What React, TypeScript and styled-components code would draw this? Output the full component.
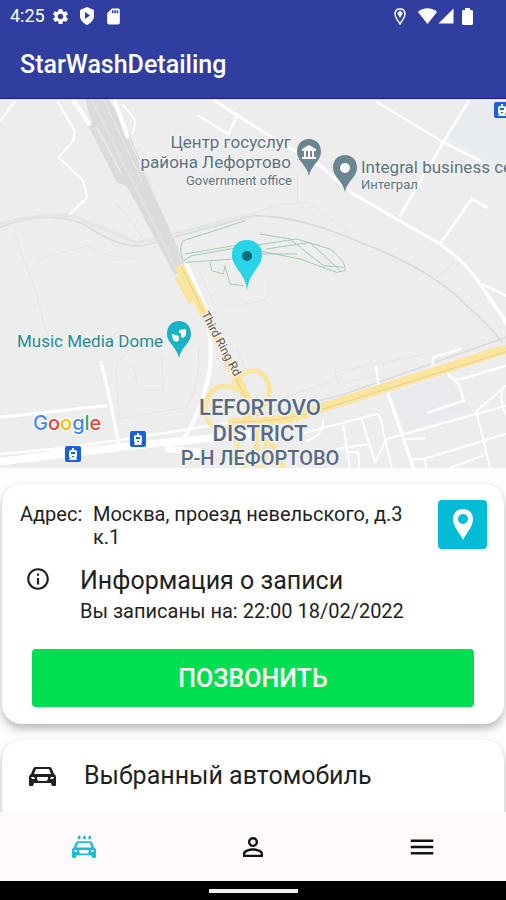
import React from "react";
import styled, { createGlobalStyle } from "styled-components";
import {
  MdInfoOutline,
  MdMenu,
  MdPersonOutline,
  MdSdCard,
  MdSettings,
  MdSignalCellular4Bar,
} from "react-icons/md";

const GlobalStyle = createGlobalStyle`
  *, *::before, *::after { box-sizing: border-box; }
  body { margin: 0; background: #fff; }
  body, button { font-family: Roboto, "Noto Sans", sans-serif; }
`;

const Screen = styled.div`
  display: flex;
  flex-direction: column;
  height: 100vh;
  overflow: hidden;
  color: #1f1f1f;
`;

const Header = styled.header`
  flex: none;
  background: #303f9f;
  border-bottom: 1px solid #1a1796;
  color: #fff;
`;

const StatusBar = styled.div`
  display: flex;
  align-items: center;
  justify-content: space-between;
  height: 32px;
  padding: 0 33px 0 10px;
`;

const StatusGroup = styled.div<{ $gap: number }>`
  display: flex;
  align-items: center;
  gap: ${(p) => p.$gap}px;
`;

const Clock = styled.span`
  font-size: 18px;
  line-height: 24px;
`;

const AppTitle = styled.h1`
  margin: 0;
  padding: 0 20px;
  font-size: 25px;
  font-weight: 500;
  line-height: 66px;
`;

const MapView = styled.section`
  flex: none;
  background: #ededed;
`;

const MapDrawing = styled.svg`
  display: block;
  width: 100%;
  height: auto;
  font-family: Roboto, "Noto Sans", sans-serif;
`;

const Cards = styled.main`
  display: flex;
  flex: 1 1 0;
  flex-direction: column;
  gap: 16px;
  min-height: 0;
  overflow: hidden;
  padding: 16px 2px 0;
  background: #fdfdfd;
`;

const Card = styled.section`
  flex: none;
  border-radius: 20px;
  background: #fff;
  box-shadow: 0 5px 8px rgba(0, 0, 0, 0.26), 0 0 2px rgba(0, 0, 0, 0.06);
`;

const BookingCard = styled(Card)`
  padding: 16px 17px 17px;
`;

const CarCard = styled(Card)`
  display: flex;
  align-items: center;
  gap: 28px;
  min-height: 88px;
  padding: 0 27px 16px;
`;

const AddressRow = styled.div`
  display: flex;
  align-items: flex-start;
  padding-left: 1px;
`;

const AddressLabel = styled.span`
  flex: none;
  width: 73px;
  padding-top: 3px;
  font-size: 20px;
  line-height: 23px;
`;

const Address = styled.address`
  flex: 1;
  padding-top: 3px;
  padding-right: 24px;
  font-size: 20px;
  font-style: normal;
  line-height: 23px;
`;

const MapButton = styled.button`
  display: grid;
  flex: none;
  place-items: center;
  width: 49px;
  height: 49px;
  padding: 0;
  border: 0;
  border-radius: 4px;
  background: #00bcd7;
  color: #fff;
`;

const InfoRow = styled.div`
  display: flex;
  gap: 29px;
  align-items: flex-start;
  padding: 17px 0 0 6px;
`;

const InfoIcon = styled.span`
  display: flex;
  width: 26px;
`;

const CardTitle = styled.h2`
  margin: 0;
  font-size: 25px;
  font-weight: 400;
  line-height: 30px;
`;

const BookingTime = styled.p`
  margin: 1px 0 0;
  font-size: 20px;
  line-height: 28px;
`;

const CallButton = styled.button`
  display: block;
  width: calc(100% - 26px);
  height: 58px;
  margin: 24px 13px 0;
  padding: 0;
  border: 0;
  border-radius: 4px;
  background: #00df50;
  color: #fff;
  font-size: 25px;
  font-weight: 500;
`;

const NavBar = styled.nav`
  display: grid;
  flex: none;
  grid-template-columns: repeat(3, 1fr);
  height: 69px;
  background: #fffafa;
`;

const NavButton = styled.button<{ $active?: boolean }>`
  display: grid;
  place-items: center;
  padding: 0;
  border: 0;
  background: none;
  color: ${(p) => (p.$active ? "#1fbad3" : "#111")};
`;

const GestureBar = styled.footer`
  display: flex;
  flex: none;
  align-items: center;
  justify-content: center;
  height: 19px;
  background: #000;
`;

const GestureHandle = styled.span`
  width: 89px;
  height: 4px;
  background: #f4f0f0;
`;

const ShieldPlay = () => (
  <svg width="16" height="18" viewBox="0 0 16 18" aria-hidden="true">
    <path
      fillRule="evenodd"
      fill="#fff"
      d="M8 0 L15 3 V9 C15 13 12 16 8 18 C4 16 1 13 1 9 V3 Z M6 5 V12 L11 8.500 Z"
    />
  </svg>
);

const LocationOutline = () => (
  <svg width="12" height="17" viewBox="0 0 12 17" aria-hidden="true">
    <path
      fill="none"
      stroke="#fff"
      strokeWidth="1.500"
      d="M6 16 C4 12 1 10 1 6 C1 3 3 1 6 1 C9 1 11 3 11 6 C11 10 8 12 6 16 Z"
    />
    <path fill="#fff" d="M3 5 H9 L6 10 Z" />
    <circle cx="6" cy="5" r="2" fill="#fff" />
  </svg>
);

const WifiFull = () => (
  <svg width="19" height="16" viewBox="0 0 19 16" aria-hidden="true">
    <path fill="#fff" d="M0 4 C5 -1 14 -1 19 4 L9.500 16 Z" />
  </svg>
);

const Battery = () => (
  <svg width="11" height="17" viewBox="0 0 11 17" aria-hidden="true">
    <path fill="#fff" d="M3 0 H8 V2 H10 L11 3 V16 L10 17 H1 L0 16 V3 L1 2 H3 Z" />
  </svg>
);

const MapMarker = () => (
  <svg width="20" height="31" viewBox="0 0 20 31" aria-hidden="true">
    <path
      fill="currentColor"
      fillRule="evenodd"
      d="M10 31 C7 24 0 18 0 10 C0 4 4 0 10 0 C16 0 20 4 20 10 C20 18 13 24 10 31 Z M10 5 A5 5 0 1 0 10 15 A5 5 0 1 0 10 5 Z"
    />
  </svg>
);

const CAR_FRONT =
  "M6 0 H21 Q22 0 23 2 L25 7 Q27 8 27 10 V18 Q27 19 26 19 H23 L22 16 H5 L4 19 H1 Q0 19 0 18 V10 Q0 8 2 7 L4 2 Q5 0 6 0 Z M7 2 L5 7 H22 L20 2 Z M2 10 L3 12 H6 L5 10 Z M22 10 L21 12 H24 L25 10 Z M8 10 Q8 14 10 14 H17 Q19 14 19 10 Z";

const CarFront = () => (
  <svg width="27" height="19" viewBox="0 0 27 19" aria-hidden="true">
    <path fill="currentColor" fillRule="evenodd" d={CAR_FRONT} />
  </svg>
);

const CarWash = () => (
  <svg width="24" height="23" viewBox="0 0 27 26" aria-hidden="true">
    <path fill="currentColor" fillRule="evenodd" transform="translate(0 7)" d={CAR_FRONT} />
    <g fill="currentColor">
      <path d="M8 0 L10 3 Q9 5 8 5 Q7 5 6 3 Z" />
      <path d="M14 0 L16 3 Q15 5 14 5 Q13 5 12 3 Z" />
      <path d="M20 0 L22 3 Q21 5 20 5 Q19 5 18 3 Z" />
    </g>
  </svg>
);

type PinProps = { x: number; y: number; color: string; children?: React.ReactNode };

const PlacePin = ({ x, y, color, children }: PinProps) => (
  <g transform={`translate(${x} ${y})`}>
    <path
      fill={color}
      d="M0 0 C-2 -11 -12 -15 -12 -24 C-12 -32 -7 -37 0 -37 C7 -37 12 -32 12 -24 C12 -15 2 -11 0 0 Z"
    />
    {children}
  </g>
);

const TransitStop = ({ x, y }: { x: number; y: number }) => (
  <g transform={`translate(${x} ${y})`}>
    <rect width="16" height="16" rx="2" fill="#1a5fdc" />
    <path
      fill="#fff"
      fillRule="evenodd"
      d="M7 2 H9 V4 H10 Q12 4 12 6 V10 Q12 12 11 12 L12 14 H4 L5 12 Q4 12 4 10 V6 Q4 4 6 4 H7 Z M6 6 V8 H10 V6 Z M7 10 V11 H9 V10 Z"
    />
  </g>
);

/* Road geometry is drawn on a grid three times finer than the labels. */
const Roads = () => (
  <g transform="scale(0.333333)" fill="none" strokeLinejoin="round" strokeLinecap="round">
    <path fill="#e9ecee" d="M1345 112 L1405 5 H1518 V190 L1440 175 Z" />
    <path fill="#e8eaed" d="M1170 885 L1340 828 L1390 905 L1420 925 L1220 1000 Z" />

    <g stroke="#e3e4e6" strokeWidth="3">
      <path d="M40 395 L75 490 L105 570 L135 690 L195 785" />
      <path d="M105 483 L265 440 L325 470 L405 478" />
      <path d="M350 315 L400 375 L430 420" />
      <path d="M375 770 Q345 775 348 830 L358 960 L560 925 Q605 860 595 745" />
      <path d="M400 800 L412 855 Q430 885 490 870 L485 770" />
      <path d="M600 520 L640 610 L658 630 L790 605 Q820 590 805 540" />
      <path d="M710 750 L745 830" />
      <path d="M840 900 L1010 840 L1020 855 L1130 830 M1010 840 L1005 820 L1275 765" />
      <path d="M892 315 V220 M759 345 Q850 305 925 312 L1040 395" />
      <path d="M1290 525 L1310 535 L1370 485" />
    </g>
    <g stroke="#d9dbde" strokeWidth="5">
      <path d="M0 385 Q140 330 250 375 Q360 450 430 440 L759 350 Q900 350 1080 430 Q1290 510 1390 610 Q1480 690 1505 730" />
      <path d="M759 952 L1020 890 L1518 715" />
    </g>
    <path stroke="#e4e5e7" strokeWidth="10" d="M0 375 Q130 340 220 352 Q330 395 410 432 L759 345" />

    <path fill="#dbdbdc" d="M255 0 H325 L390 110 L440 225 L555 500 L525 530 L380 260 L350 250 L265 80 L275 70 Z" />
    <g stroke="#e8e8e8" strokeWidth="3">
      <path d="M310 0 L425 245 M273 0 L380 215 L535 525" />
    </g>
    <path stroke="#ededed" strokeWidth="4" d="M290 85 L365 225 M385 115 L500 365" />

    <g stroke="#fff" strokeWidth="9">
      <path d="M45 8 L0 65 M175 10 L224 95 L220 125 L176 175 L250 245 L262 295 L210 345" strokeWidth="6" />
      <path d="M223 8 L268 75 M345 8 L382 112" strokeWidth="12" />
      <path d="M370 18 L407 65 L398 105" strokeWidth="5" />
      <path d="M645 5 L760 80 L875 150 L960 200 L1060 285 L1320 435 Q1400 490 1450 570 L1518 665" />
      <path d="M595 50 L685 105 L710 55 M1130 8 L1330 130 L1440 185" strokeWidth="7" />
      <path d="M1405 8 L1330 130 L1200 350 M1320 435 L1415 300 L1460 325" strokeWidth="8" />
      <path d="M1440 555 L1518 675 M1450 557 L1518 590" strokeWidth="7" />
      <path d="M303 790 L325 880 L358 1040 M0 955 L320 920" strokeWidth="9" />
      <path d="M560 500 L615 620 Q650 780 615 870 Q605 930 545 1030" strokeWidth="12" />
      <path d="M0 1065 L160 1050 L345 1025 M155 1055 L760 960" strokeWidth="7" />
      <path d="M0 1088 L400 1040 L759 1005" strokeWidth="23" />
      <path d="M505 1050 L600 1060" strokeWidth="20" />
      <path d="M1298 795 L1300 775 L1380 750" strokeWidth="7" />
      <path d="M1135 855 L1130 820 L1128 805" strokeWidth="6" />
      <path d="M1165 885 L1240 1107" strokeWidth="9" />
      <path d="M1345 825 Q1360 850 1400 835 L1518 800 M1345 825 L1375 855 L1392 905 L1285 940" strokeWidth="7" />
      <path d="M900 1005 L1130 945 Q1145 950 1150 1000 L1175 1107 M1030 980 L1050 1107 M1085 960 L1125 1090 L1160 1020 L1518 920" strokeWidth="6" />
      <path d="M920 1025 Q970 1010 970 965 M1010 1050 L1105 1035 M1040 1060 L1075 1060 L1078 1107" strokeWidth="6" />
      <path d="M1430 940 L1470 1107 M1430 935 L1518 860 M1510 860 Q1495 910 1518 945 M1240 1080 L1275 1080 L1278 1107 M1270 1080 L1518 1005 M1350 1107 L1450 1070 M1220 1020 L1275 1018" strokeWidth="6" />
    </g>

    <g stroke="#fae59b">
      <path strokeWidth="26" strokeLinecap="butt" d="M537 500 L625 670 L750 915" />
      <path strokeWidth="14" d="M532 540 L570 605 M750 915 L730 980 Q670 1010 625 970 Q600 900 650 865 Q690 850 740 890 M700 850 Q770 780 805 850 Q820 920 750 950" />
      <path strokeWidth="28" strokeLinecap="butt" d="M690 970 Q850 975 970 925 L1518 750" />
      <path strokeWidth="16" d="M730 970 L805 1000 L790 1107 M690 970 L735 1107 M815 1030 L850 1107 M770 970 L770 1107" />
    </g>
    <path stroke="#e8cf96" strokeWidth="3" d="M700 970 Q850 970 970 930 L1518 758 M545 505 L740 905" />

    <g stroke="#9ccbb0" strokeWidth="3" strokeDasharray="14 3">
      <path d="M735 365 L660 390 L550 425 Q535 445 550 485 L575 470 L690 450 L890 420 L990 450 Q1040 490 1035 515 L1010 520 L900 480 L700 440 L555 465" />
      <path d="M630 490 L635 515 L670 525 L675 500 L690 555 L730 560 M560 490 L700 480 M780 405 L870 420 L970 500 L1030 505 M800 450 L930 430 L1020 515 M770 465 L890 465" />
    </g>
  </g>
);

const CityMap = () => (
  <MapDrawing viewBox="0 0 506 369" role="img" aria-label="Карта: Лефортово">
    <rect width="506" height="369" fill="#ededed" />
    <Roads />

    <g stroke="#f2f2f2" strokeWidth="3" strokeLinejoin="round" paintOrder="stroke">
      <g fill="#5b7480" textAnchor="end">
        <text x="291" y="49" fontSize="17">Центр госуслуг</text>
        <text x="291" y="69" fontSize="17">района Лефортово</text>
        <text x="292" y="86" fontSize="13">Government office</text>
      </g>
      <g fill="#5b7480">
        <text x="361" y="74" fontSize="17">Integral business center</text>
        <text x="361" y="90" fontSize="13">Интеграл</text>
      </g>
      <text x="17" y="248" fontSize="17" fill="#238a93">Music Media Dome</text>
      <text fontSize="12" fill="#695447" transform="translate(201 215) rotate(62)">Third Ring Rd</text>
      <g fill="#566b82" fontWeight="500" textAnchor="middle">
        <text x="260" y="316" fontSize="22">LEFORTOVO</text>
        <text x="260" y="342" fontSize="22">DISTRICT</text>
        <text x="260" y="366" fontSize="20">Р-Н ЛЕФОРТОВО</text>
      </g>
    </g>

    <PlacePin x={309} y={77} color="#6b8592">
      <path fill="#fff" d="M-7 -27 L0 -31 L7 -27 V-25 H5 V-19 H7 V-17 H-7 V-19 H-5 V-25 H-7 Z" />
      <path stroke="#6b8592" strokeWidth="2" d="M-2 -25 V-19 M2 -25 V-19" />
    </PlacePin>
    <PlacePin x={345} y={93} color="#6b8592">
      <circle cy="-24" r="5" fill="#fff" />
    </PlacePin>
    <PlacePin x={179} y={259} color="#19b2c4">
      <path fill="#fff" d="M-7 -24 L0 -22 V-18 Q-2 -15 -5 -17 Q-7 -19 -7 -24 Z M0 -28 L7 -29 Q8 -22 4 -20 L2 -21 V-25 L0 -25 Z" />
    </PlacePin>
    <path
      fill="#29d3e8"
      d="M247 192 C246 174 232 169 232 156 C232 147 238 141 247 141 C256 141 262 147 262 156 C262 169 248 174 247 192 Z"
    />
    <circle cx="247" cy="157" r="5" fill="#146b78" />

    <TransitStop x={494} y={3} />
    <TransitStop x={130} y={332} />
    <TransitStop x={65} y={347} />

    <text x="33" y="331" fontSize="20" fontFamily="Inter, sans-serif" fontWeight="500" stroke="#fff" strokeWidth="2" paintOrder="stroke">
      <tspan fill="#4285f4">G</tspan>
      <tspan fill="#ea4335">o</tspan>
      <tspan fill="#fbbc05">o</tspan>
      <tspan fill="#4285f4">g</tspan>
      <tspan fill="#34a853">l</tspan>
      <tspan fill="#ea4335">e</tspan>
    </text>
  </MapDrawing>
);

export default function App() {
  return (
    <Screen>
      <GlobalStyle />
      <Header>
        <StatusBar>
          <StatusGroup $gap={6}>
            <Clock>4:25</Clock>
            <StatusGroup $gap={9}>
              <MdSettings size={19} />
              <ShieldPlay />
              <MdSdCard size={19} />
            </StatusGroup>
          </StatusGroup>
          <StatusGroup $gap={12}>
            <LocationOutline />
            <StatusGroup $gap={7}>
              <StatusGroup $gap={0}>
                <WifiFull />
                <MdSignalCellular4Bar size={18} />
              </StatusGroup>
              <Battery />
            </StatusGroup>
          </StatusGroup>
        </StatusBar>
        <AppTitle>StarWashDetailing</AppTitle>
      </Header>

      <MapView>
        <CityMap />
      </MapView>

      <Cards>
        <BookingCard>
          <AddressRow>
            <AddressLabel>Адрес:</AddressLabel>
            <Address>Москва, проезд невельского, д.3 к.1</Address>
            <MapButton type="button" aria-label="Показать на карте">
              <MapMarker />
            </MapButton>
          </AddressRow>
          <InfoRow>
            <InfoIcon>
              <MdInfoOutline size={26} />
            </InfoIcon>
            <div>
              <CardTitle>Информация о записи</CardTitle>
              <BookingTime>Вы записаны на: 22:00 18/02/2022</BookingTime>
            </div>
          </InfoRow>
          <CallButton type="button">ПОЗВОНИТЬ</CallButton>
        </BookingCard>
        <CarCard>
          <CarFront />
          <CardTitle>Выбранный автомобиль</CardTitle>
        </CarCard>
      </Cards>

      <NavBar>
        <NavButton type="button" aria-label="Мойка" $active>
          <CarWash />
        </NavButton>
        <NavButton type="button" aria-label="Профиль">
          <MdPersonOutline size={30} />
        </NavButton>
        <NavButton type="button" aria-label="Меню">
          <MdMenu size={30} />
        </NavButton>
      </NavBar>
      <GestureBar>
        <GestureHandle />
      </GestureBar>
    </Screen>
  );
}
